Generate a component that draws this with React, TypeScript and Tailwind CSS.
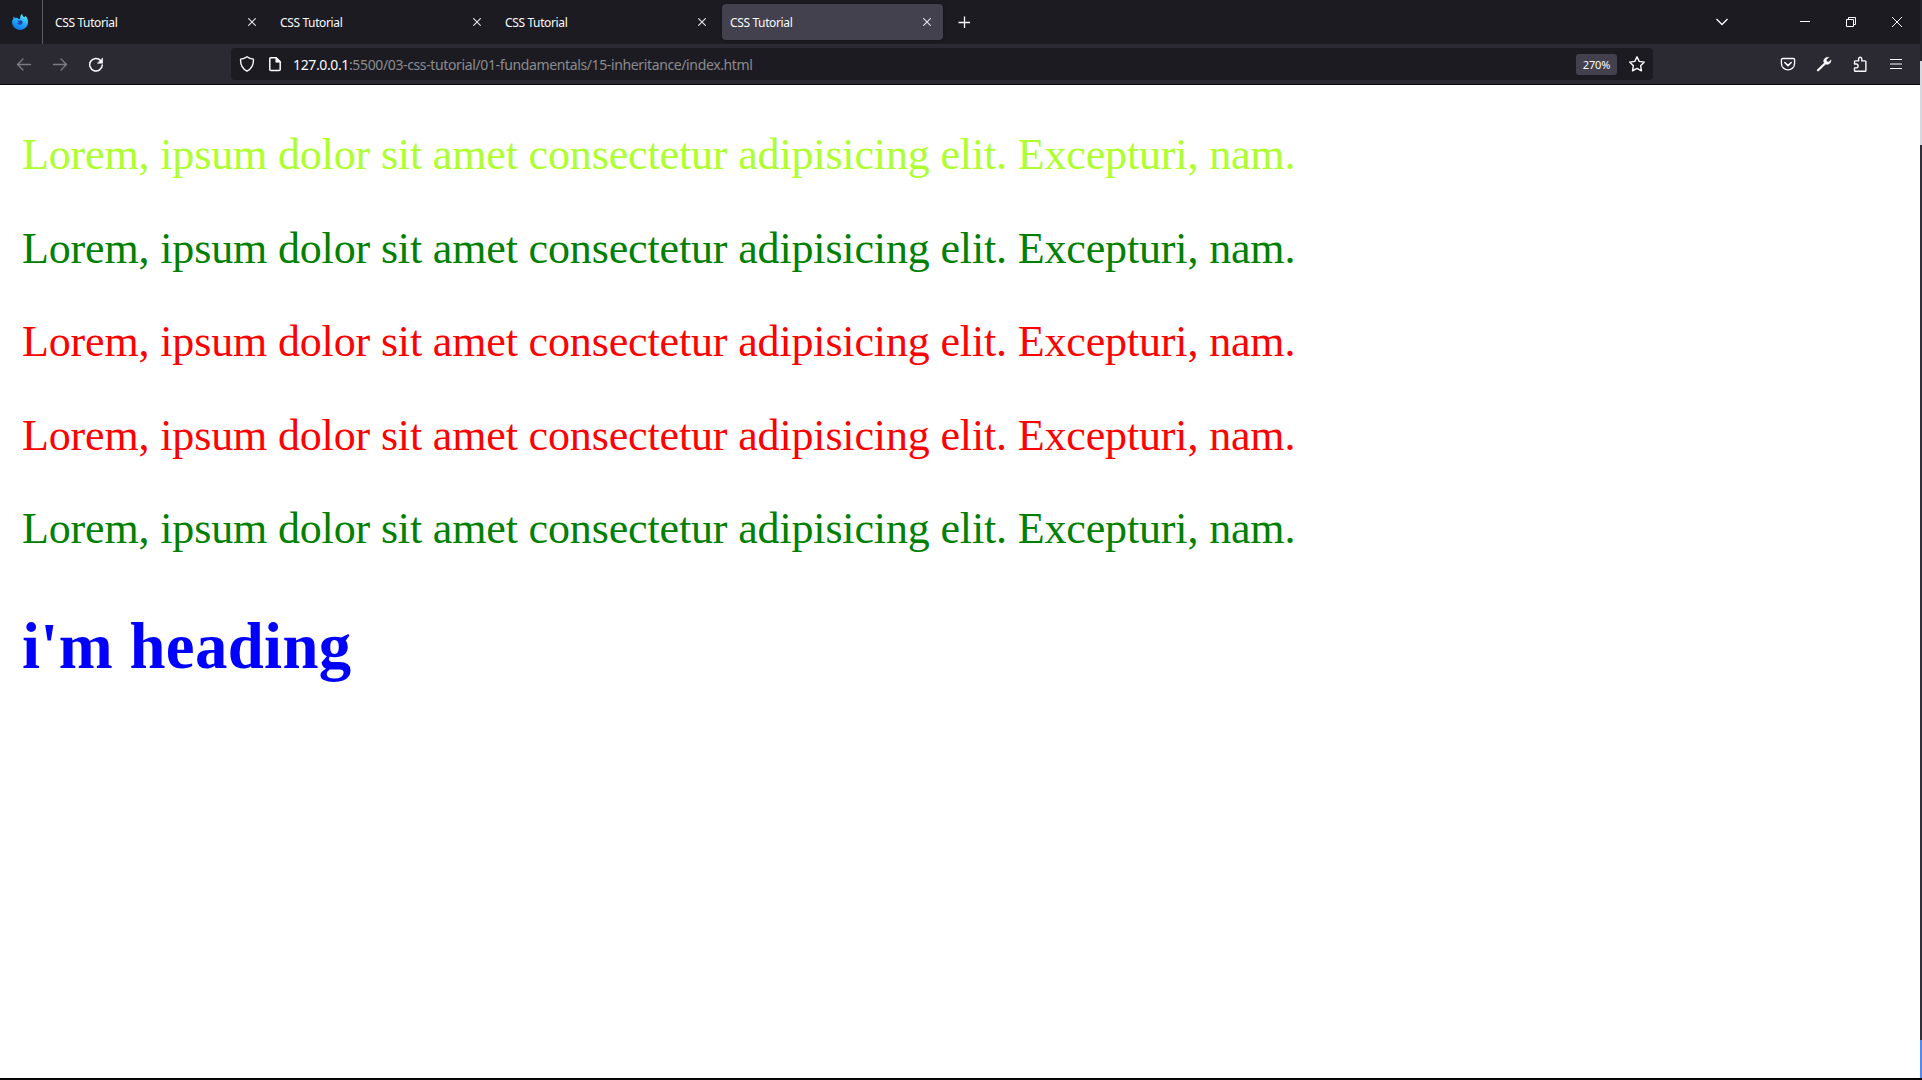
import type { ReactNode } from "react";

function Icon({ children, className = "" }: { children: ReactNode; className?: string }) {
  return (
    <svg
      viewBox="0 0 16 16"
      fill="none"
      stroke="currentColor"
      strokeLinecap="round"
      strokeLinejoin="round"
      strokeWidth={1.3}
      className={`block h-4 w-4 shrink-0 ${className}`}
    >
      {children}
    </svg>
  );
}

function FirefoxLogo() {
  return (
    <svg viewBox="0 0 16 16" className="block h-4 w-4 shrink-0">
      <defs>
        <linearGradient id="flame" x1="0.8" y1="0" x2="0.3" y2="1">
          <stop offset="0" stopColor="#5df0fb" />
          <stop offset="0.45" stopColor="#25b2fa" />
          <stop offset="1" stopColor="#0b74e6" />
        </linearGradient>
      </defs>
      <path
        d="M1.200 5 1.500 2.500 3.200 4.100C4 3.800 4.800 3.700 5.500 3.900L7 5.200 8.200 4.600C7.900 2.700 8.600 1 10.100 0c.2 1.700 1.200 2.400 2.300 3.300.5-.4.7-.9.8-1.500 1.900 1.500 2.800 3.900 2.800 6.300 0 4.400-3.500 7.900-8 7.900s-8-3.500-8-7.900c0-1.200.5-2.200 1.200-3.100z"
        fill="url(#flame)"
      />
      <path d="M5.200 6.600c1 .2 1.700.2 2.400-.2 1.300-.4 2.700.4 3 1.700.3 1.500-.9 2.700-2.500 2.700-1.500 0-2.700-.8-3-2 .8.3 1.700.3 2.300-.2-1-.3-1.800-1-2.200-2z" fill="#2b3fae" />
    </svg>
  );
}

function CrossSmall() {
  return (
    <svg viewBox="0 0 8 8" className="block h-2 w-2 shrink-0" fill="none" stroke="#e6e6ea" strokeWidth={1.1}>
      <path d="M.3.3l7.400 7.400M7.700.3.3 7.700" />
    </svg>
  );
}

function Tab({ active = false }: { active?: boolean }) {
  return (
    <div
      className={
        "flex h-9 w-[221px] shrink-0 items-center justify-between rounded-[4px] pr-3 pl-2 " +
        (active ? "bg-[#42414d] shadow-[0_0_3px_rgba(0,0,0,0.5)]" : "")
      }
    >
      <span className="pt-0.5 text-[12px] leading-4 tracking-[-0.37px] whitespace-nowrap text-[#fbfbfe]">CSS Tutorial</span>
      <CrossSmall />
    </div>
  );
}

function TabStrip() {
  return (
    <div className="flex h-11 items-center bg-[#1c1b22]">
      <div className="flex h-11 w-[43px] shrink-0 items-center border-r border-[#5b5b66] pl-3">
        <FirefoxLogo />
      </div>
      <div className="ml-1 flex gap-1">
        <Tab />
        <Tab />
        <Tab />
        <Tab active />
      </div>
      <svg viewBox="0 0 12 12" className="ml-[15px] block h-3 w-3" stroke="#fbfbfe" strokeWidth={1.3}>
        <path d="M6.500 .5v12M.5 6.500h12" />
      </svg>
      <div className="ml-auto flex h-11 items-center pr-[18px] text-[#fbfbfe]">
        <svg viewBox="0 0 12 8" className="mr-[72px] block h-2 w-3" fill="none" stroke="currentColor" strokeWidth={1.300}>
          <path d="M.5 1 6 6.500 11.500 1" />
        </svg>
        <svg viewBox="0 0 10 10" className="mr-9 block h-2.5 w-2.5" stroke="currentColor">
          <path d="M0 4.500h10" />
        </svg>
        <svg viewBox="0 0 10 10" className="mr-9 block h-2.5 w-2.5" fill="none" stroke="currentColor">
          <path d="M.5 2.500h7v7h-7zM2.500 2.500v-2h7v7h-2" />
        </svg>
        <svg viewBox="0 0 10 10" className="block h-2.5 w-2.5" fill="none" stroke="currentColor">
          <path d="M0 0l10 10M10 0 0 10" />
        </svg>
      </div>
    </div>
  );
}

function NavBar() {
  return (
    <div className="flex h-[41px] items-center border-b border-[#0c0c0d] bg-[#2b2a33] text-[#fbfbfe]">
      <div className="flex w-[231px] shrink-0 items-center gap-5 pl-4">
        <Icon className="text-[#7d7c84]">
          <path d="M14.500 8.500H1.500M7 3 1.500 8.500 7 14" />
        </Icon>
        <Icon className="text-[#7d7c84]">
          <path d="M1.500 8.500h13M9 3l5.500 5.500L9 14" />
        </Icon>
        <Icon>
          <path d="M12.700 4.500A6.300 6.300 0 1 0 14.300 9" strokeWidth={1.500} />
          <path d="M14.600 2.300v4.900H9.700z" fill="currentColor" strokeWidth={0.6} />
        </Icon>
      </div>
      <div className="flex h-8 w-[1422px] shrink-0 items-center rounded-[4px] bg-[#1c1b22] pr-2 pl-2">
        <Icon>
          <path d="M8 .7c1.900 1.500 4.100 2.200 6.400 2.400.3 4.900-1.500 9.600-6.400 12.100C3.100 12.700 1.300 8 1.600 3.100 3.900 2.900 6.100 2.200 8 .7z" strokeWidth={1.400} />
        </Icon>
        <Icon className="ml-3">
          <path d="M3.200 1.700h6l4 4v7.600c0 .7-.4 1.100-1.100 1.100H3.900c-.7 0-1.100-.4-1.100-1.100V2.700z" strokeWidth={1.500} />
          <path d="M8.800 1.500v4.700h4.700z" fill="currentColor" strokeWidth={0.6} />
        </Icon>
        <span className="ml-[10px] pt-0.5 text-[14px] leading-5 tracking-[-0.37px] whitespace-nowrap text-[#8b8b90]">
          <span className="text-[#fbfbfe]">127.0.0.1</span>:5500/03-css-tutorial/01-fundamentals/15-inheritance/index.html
        </span>
        <span className="ml-auto flex h-[21px] w-[41px] items-center justify-center rounded-[3px] bg-[#42414d] pt-px text-[11px] leading-none tracking-[-0.1px]">
          270%
        </span>
        <Icon className="ml-3">
          <path d="M8 .8l2.200 4.600 5.100.7-3.700 3.600.9 5.100L8 12.400l-4.500 2.400.9-5.100L.7 6.100l5.100-.7z" strokeWidth={1.400} />
        </Icon>
      </div>
      <div className="ml-auto flex items-center gap-5 pr-4">
        <Icon>
          <path d="M2.700 2.500h10.600c.8 0 1.300.5 1.300 1.300v3.400c0 3.800-2.900 6.600-6.600 6.600S1.400 11 1.400 7.200V3.800c0-.8.5-1.300 1.300-1.300z" />
          <path d="M4.800 6.500 8 9.600l3.200-3.100" strokeWidth={1.500} />
        </Icon>
        <Icon>
          <path d="M2 14.300 9 7.500" strokeWidth={2.300} />
          <path d="M12.700 1.300 10.300 3.700l.4 1.900 2 .5 2.300-2.300c.4 2.900-1.900 5.100-4.800 4.500L7.700 6C7.300 3.100 9.600.7 12.700 1.300z" fill="currentColor" strokeWidth={0.4} />
        </Icon>
        <Icon>
          <path d="M2.500 8V5.700c0-.5.300-.8.800-.8h3.300V3c0-1.100.6-1.800 1.600-1.800s1.600.7 1.600 1.800v1.900h3.300c.5 0 .8.300.8.800v8.800c0 .5-.3.800-.8.800H3.300c-.5 0-.8-.3-.8-.8v-2.600h1.700c1.200 0 1.900-.7 1.900-1.900s-.7-2-1.900-2z" strokeWidth={1.400} />
        </Icon>
        <Icon>
          <path d="M2.500 3.500h11M2.500 8h11M2.500 12.500h11" strokeWidth={1.200} />
        </Icon>
      </div>
    </div>
  );
}

const lines = ["text-[#adff2f]", "text-[#008000]", "text-[#ff0000]", "text-[#ff0000]", "text-[#008000]"];

export default function App() {
  return (
    <div className="flex h-[1080px] w-[1922px] flex-col overflow-hidden bg-[#050507]">
      <div className="flex h-[1078px]">
        <div className="flex w-[1920px] shrink-0 flex-col bg-white font-['Noto_Sans','Open_Sans',sans-serif]">
          <TabStrip />
          <NavBar />
          <main className="flex flex-col pt-[45px] pl-[22px] font-['Liberation_Serif',serif]">
            {lines.map((color, i) => (
              <p key={i} className={`mb-[43.500px] text-[44px] leading-[50px] tracking-[-0.15px] whitespace-nowrap ${color}`}>
                Lorem, ipsum dolor sit amet consectetur adipisicing elit. Excepturi, nam.
              </p>
            ))}
            <h2 className="mt-[11px] text-[64.8px] leading-[74px] font-bold tracking-[0.33px] text-[#0000ff]">i&#39;m heading</h2>
          </main>
        </div>
        <div className="flex w-0.5 shrink-0 flex-col">
          <div className="h-[61px] bg-[#25252d]" />
          <div className="h-[84px] bg-[#d5d8df]" />
          <div className="h-[895px] bg-[#2f3039]" />
          <div className="h-[38px] bg-[#5288f5]" />
        </div>
      </div>
    </div>
  );
}
